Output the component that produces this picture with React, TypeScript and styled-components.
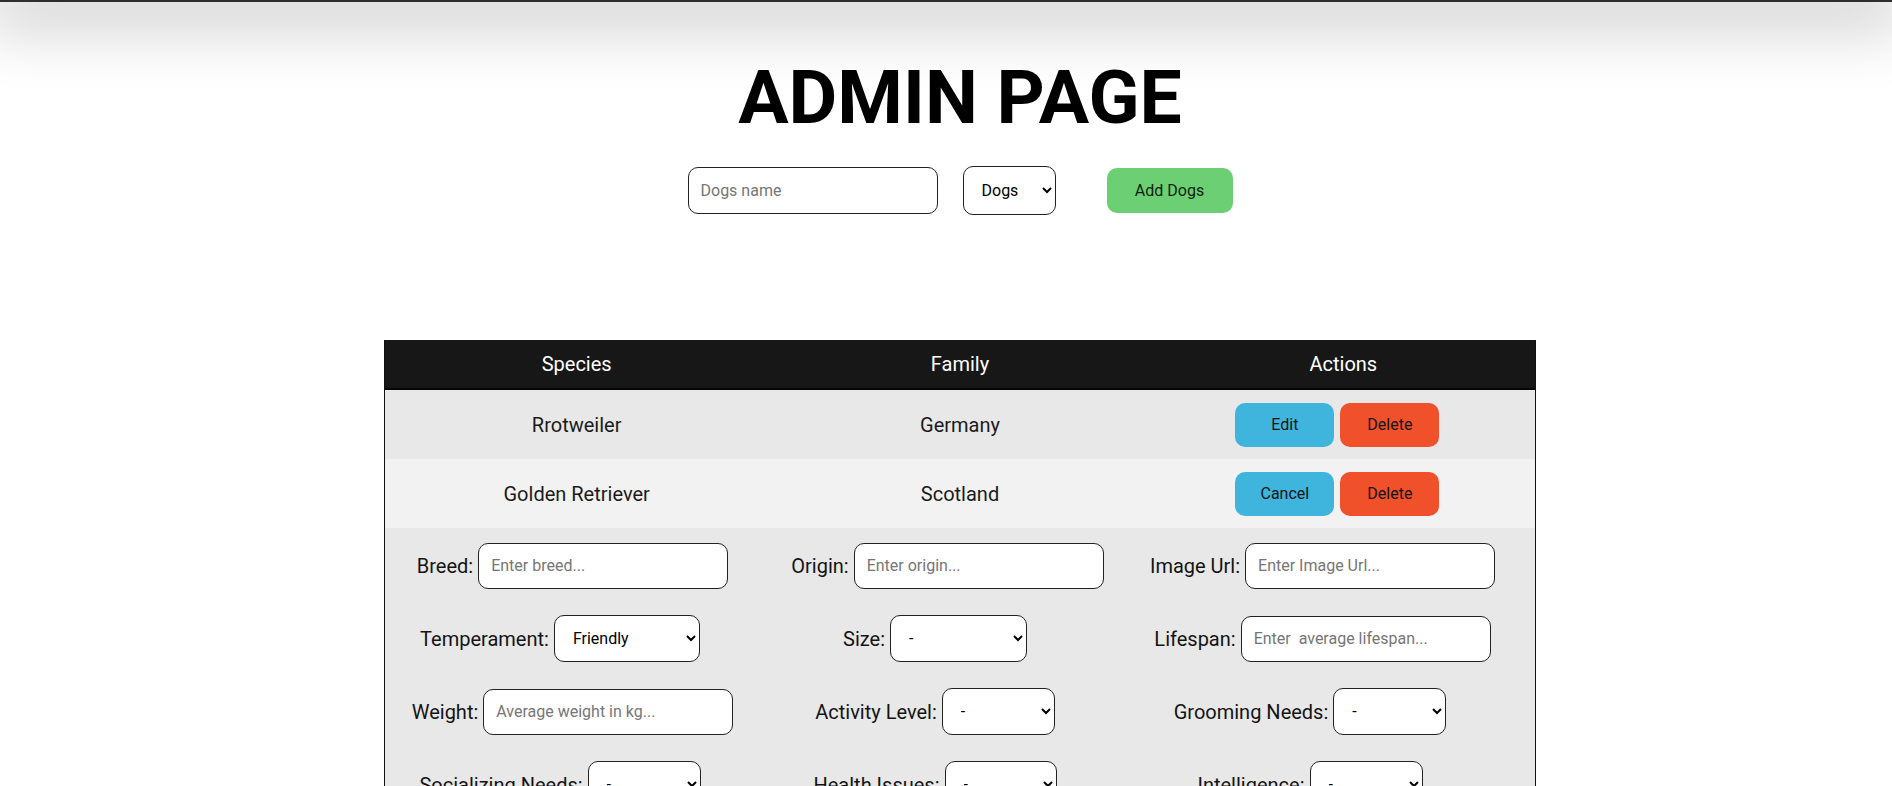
import React from 'react';
import styled, { createGlobalStyle, css } from 'styled-components';

const GlobalStyle = createGlobalStyle`
  html, body {
    margin: 0;
    padding: 0;
    background: #fff;
  }
  body {
    font-family: Roboto, "Liberation Sans", Arial, sans-serif;
    color: #111;
    overflow-x: hidden;
  }
`;

type FieldDef =
  | { label: string; kind: 'input'; placeholder: string }
  | { label: string; kind: 'select'; value: string; width: number };

const fields: FieldDef[] = [
  { label: 'Breed:', kind: 'input', placeholder: 'Enter breed...' },
  { label: 'Origin:', kind: 'input', placeholder: 'Enter origin...' },
  { label: 'Image Url:', kind: 'input', placeholder: 'Enter Image Url...' },
  { label: 'Temperament:', kind: 'select', value: 'Friendly', width: 146 },
  { label: 'Size:', kind: 'select', value: '-', width: 137 },
  { label: 'Lifespan:', kind: 'input', placeholder: 'Enter  average lifespan...' },
  { label: 'Weight:', kind: 'input', placeholder: 'Average weight in kg...' },
  { label: 'Activity Level:', kind: 'select', value: '-', width: 113 },
  { label: 'Grooming Needs:', kind: 'select', value: '-', width: 113 },
  { label: 'Socializing Needs:', kind: 'select', value: '-', width: 113 },
  { label: 'Health Issues:', kind: 'select', value: '-', width: 112 },
  { label: 'Intelligence:', kind: 'select', value: '-', width: 113 },
];

const dogs = [
  { species: 'Rrotweiler', family: 'Germany', editing: false },
  { species: 'Golden Retriever', family: 'Scotland', editing: true },
];

export default function App() {
  return (
    <>
      <GlobalStyle />
      <TopShade />
      <Main>
        <Title>ADMIN PAGE</Title>
        <Controls>
          <TextField $w={250} $h={47} placeholder="Dogs name" />
          <SelectField $w={93} $h={49} defaultValue="Dogs" $gapAfter={51}>
            <option>Dogs</option>
            <option>Cats</option>
          </SelectField>
          <AddButton>Add Dogs</AddButton>
        </Controls>

        <Table>
          <HeadRow>
            <div>Species</div>
            <div>Family</div>
            <div>Actions</div>
          </HeadRow>
          {dogs.map((d, i) => (
            <DataRow key={d.species} $shade={i % 2 === 0 ? '#e8e8e8' : '#f2f2f2'}>
              <div>{d.species}</div>
              <div>{d.family}</div>
              <Actions>
                <ActionButton $tone="edit">{d.editing ? 'Cancel' : 'Edit'}</ActionButton>
                <ActionButton $tone="delete">Delete</ActionButton>
              </Actions>
            </DataRow>
          ))}
          <FormPanel>
            {fields.map((f) => (
              <Field key={f.label}>
                {f.label}
                {f.kind === 'input' ? (
                  <TextField $w={250} $h={46} placeholder={f.placeholder} />
                ) : (
                  <SelectField $w={f.width} $h={47} $gapAfter={25} defaultValue={f.value}>
                    <option>{f.value}</option>
                  </SelectField>
                )}
              </Field>
            ))}
          </FormPanel>
        </Table>
      </Main>
    </>
  );
}

const TopShade = styled.div`
  height: 2px;
  background: #2e2e2e;
  box-shadow: 0 4px 64px 16px rgba(0, 0, 0, 0.28);
`;

const Main = styled.main`
  display: flex;
  flex-direction: column;
  align-items: center;
  padding-left: 28px;
  padding-bottom: 40px;
`;

const Title = styled.h1`
  margin: 51px 0 0;
  font-size: 75px;
  font-weight: 700;
  line-height: normal;
  color: #000;
`;

const Controls = styled.div`
  display: flex;
  align-items: center;
  margin-top: 25px;

  & > input {
    margin-right: 25px;
  }
`;

const fieldBase = css`
  box-sizing: border-box;
  border: 1px solid #222;
  border-radius: 10px;
  background: #fff;
  font-family: Roboto, "Liberation Sans", Arial, sans-serif;
  font-size: 16px;
  color: #000;
`;

const TextField = styled.input<{ $w: number; $h: number }>`
  ${fieldBase};
  width: ${(p) => p.$w}px;
  height: ${(p) => p.$h}px;
  padding: 0 12px;

  &::placeholder {
    color: #767676;
  }
`;

const SelectField = styled.select<{ $w: number; $h: number; $gapAfter?: number }>`
  ${fieldBase};
  width: ${(p) => p.$w}px;
  height: ${(p) => p.$h}px;
  padding: 0 8px 0 14px;
  margin-right: ${(p) => p.$gapAfter ?? 0}px;
`;

const AddButton = styled.button`
  width: 126px;
  height: 45px;
  border: none;
  border-radius: 10px;
  background: #6dcf73;
  font-family: Roboto, "Liberation Sans", Arial, sans-serif;
  font-size: 16px;
  color: #0d1f0d;
`;

const Table = styled.div`
  box-sizing: border-box;
  width: 1152px;
  margin-top: 125px;
  border-left: 1px solid #111;
  border-right: 1px solid #111;
`;

const HeadRow = styled.div`
  box-sizing: border-box;
  display: grid;
  grid-template-columns: repeat(3, 1fr);
  align-items: center;
  height: 50px;
  background: #171717;
  border-bottom: 2px solid #050505;
  color: #fff;
  font-size: 20px;
  text-align: center;
`;

const DataRow = styled.div<{ $shade: string }>`
  display: grid;
  grid-template-columns: repeat(3, 1fr);
  align-items: center;
  height: 69px;
  background: ${(p) => p.$shade};
  color: #1b1b1b;
  font-size: 20px;
  text-align: center;
`;

const Actions = styled.div`
  display: flex;
  justify-content: center;
  gap: 6px;
  padding-right: 12px;
`;

const ActionButton = styled.button<{ $tone: 'edit' | 'delete' }>`
  width: 99px;
  height: 44px;
  border: none;
  border-radius: 10px;
  background: ${(p) => (p.$tone === 'edit' ? '#3fb4dd' : '#f0502a')};
  font-family: Roboto, "Liberation Sans", Arial, sans-serif;
  font-size: 16px;
  color: #141414;
`;

const FormPanel = styled.div`
  display: grid;
  grid-template-columns: repeat(3, 1fr);
  row-gap: 26px;
  padding: 14px 25px 40px 0;
  background: #e8e8e8;
`;

const Field = styled.label`
  display: flex;
  align-items: center;
  justify-content: center;
  gap: 5px;
  height: 47px;
  font-size: 20px;
  color: #141414;
`;
